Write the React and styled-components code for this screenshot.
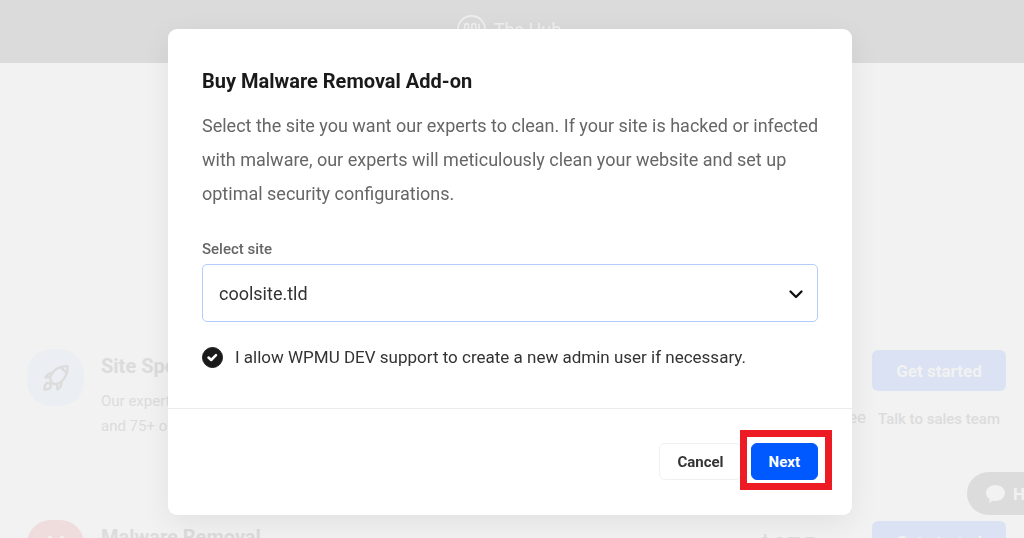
import React, { useState } from 'react';
import styled, { createGlobalStyle } from 'styled-components';

const GlobalStyle = createGlobalStyle`
  * {
    box-sizing: border-box;
  }

  body {
    margin: 0;
    overflow: hidden;
    font-family: Roboto, 'Liberation Sans', sans-serif;
    background-color: #f2f2f2;
  }
`;

const Page = styled.div`
  height: 100vh;
  overflow: hidden;
`;

const Header = styled.header`
  display: flex;
  justify-content: center;
  align-items: center;
  gap: 8px;
  height: 63px;
  padding: 0 6px 5px 0;
  color: #efefef;
  font-size: 18px;
  background-color: #dbdbdb;
`;

const ServiceList = styled.ul`
  list-style: none;
  margin: 0;
  padding: 286px 18px 0 27px;
`;

const Service = styled.li`
  display: flex;
  align-items: flex-start;
  height: 171px;
`;

const ServiceIcon = styled.span`
  display: flex;
  flex: none;
  justify-content: center;
  align-items: center;
  width: 57px;
  height: 57px;
  margin-right: 17px;
  border-radius: 24px;
  color: ${props => props.$color};
  background-color: ${props => props.$background};
`;

const ServiceBody = styled.div`
  flex: 1;
  color: #dcdcdc;
`;

const ServiceName = styled.h3`
  margin: 4px 0 10px;
  font-size: 20px;
  line-height: 26px;
  font-weight: 700;
`;

const ServiceText = styled.p`
  margin: 0;
  font-size: 15px;
  line-height: 25px;
`;

const ServicePrice = styled.div`
  padding: 9px 6px 0 0;
  color: #dcdcdc;
  font-size: 17px;
  line-height: 24px;
  text-align: right;
`;

const PriceAmount = styled.div`
  margin: 0 50px 11px 0;
  font-size: 26px;
  line-height: 36px;
`;

const ServiceActions = styled.div`
  display: flex;
  flex-direction: column;
  align-items: center;
  gap: 18px;
  width: 134px;
  padding-top: 1px;
`;

const StartButton = styled.button`
  width: 100%;
  height: 41px;
  border: 0;
  border-radius: 6px;
  color: #f2f2f2;
  font: 700 17px Roboto, sans-serif;
  background-color: #dae2f3;
`;

const SalesLink = styled.a`
  color: #dcdcdc;
  font-size: 15px;
  line-height: 20px;
  font-weight: 500;
  text-decoration: none;
  white-space: nowrap;
`;

const HelpButton = styled.button`
  position: fixed;
  right: -40px;
  bottom: 23px;
  display: flex;
  align-items: center;
  gap: 8px;
  width: 97px;
  height: 43px;
  padding: 0 0 0 19px;
  border: 0;
  border-radius: 22px;
  color: #f2f2f2;
  font: 700 17px Roboto, sans-serif;
  background-color: #dcdcdc;
`;

const Overlay = styled.div`
  position: fixed;
  inset: 0;
  display: flex;
  justify-content: center;
  align-items: flex-start;
  padding: 29px 20px 0 16px;
`;

const Dialog = styled.form`
  width: 100%;
  max-width: 684px;
  border-radius: 9px;
  background-color: #fff;
  box-shadow: 0 8px 30px rgba(0, 0, 0, 0.07);
`;

const DialogBody = styled.div`
  padding: 38px 34px;
`;

const Title = styled.h2`
  margin: 0 0 14px;
  color: #1a1a1a;
  font-size: 20px;
  line-height: 28px;
  font-weight: 700;
`;

const Description = styled.p`
  margin: 0 -4px 28px 0;
  color: #666;
  font-size: 18px;
  line-height: 34px;
`;

const FieldLabel = styled.label`
  display: block;
  margin-bottom: 5px;
  color: #666;
  font-size: 15px;
  line-height: 20px;
  font-weight: 500;
`;

const SelectWrap = styled.div`
  position: relative;
  margin-bottom: 22px;

  svg {
    position: absolute;
    top: 22px;
    right: 14px;
    pointer-events: none;
  }
`;

const SiteSelect = styled.select`
  display: block;
  width: 100%;
  height: 58px;
  padding: 0 40px 0 16px;
  appearance: none;
  border: 1px solid #b5cdfb;
  border-radius: 5px;
  outline: none;
  color: #333;
  font: 18px Roboto, sans-serif;
  background-color: #fff;
`;

const CheckRow = styled.label`
  display: flex;
  align-items: center;
  gap: 12px;
  color: #333;
  font-size: 17px;
  line-height: 26px;
`;

const CheckWrap = styled.span`
  position: relative;
  display: flex;
  width: 21px;
  height: 21px;

  svg {
    position: absolute;
    inset: 0;
    pointer-events: none;
  }
`;

const Checkbox = styled.input`
  width: 21px;
  height: 21px;
  margin: 0;
  appearance: none;
  border: 1px solid #1a1a1a;
  border-radius: 50%;
  background-color: #fff;

  &:checked {
    background-color: #1a1a1a;
  }
`;

const DialogFooter = styled.footer`
  display: flex;
  justify-content: flex-end;
  gap: 9px;
  padding: 34px 34px 35px;
  border-top: 1px solid #ebebeb;
`;

const Button = styled.button`
  height: 37px;
  padding: 0 17px;
  border: 1px solid ${props => (props.$primary ? '#0059ff' : '#f0f0f0')};
  border-radius: 6px;
  color: ${props => (props.$primary ? '#fff' : '#333')};
  font: 700 15px Roboto, sans-serif;
  background-color: ${props => (props.$primary ? '#0059ff' : '#fff')};
`;

const Highlight = styled.span`
  position: relative;
  display: flex;

  &::after {
    content: '';
    position: absolute;
    inset: -13px -14px -10px -11px;
    border: 7px solid #ed1c24;
    pointer-events: none;
  }
`;

const HubLogo = () => (
  <svg width="29" height="29" viewBox="0 0 30 30" fill="none" stroke="currentColor" strokeWidth="1.8">
    <circle cx="15" cy="15" r="14" />
    <path d="M8 21V11a2 2 0 0 1 4 0v8a1.7 1.7 0 0 0 3.4 0v-8a2 2 0 0 1 4 0v8a1.7 1.7 0 0 0 3.4 0V9" />
  </svg>
);

const RocketIcon = () => (
  <svg width="26" height="26" viewBox="0 0 26 26" fill="none" stroke="currentColor" strokeWidth="2.4" strokeLinejoin="round">
    <path d="M24.5 1.5C19 1 14 2.5 10.500 6.500 8 9.500 6.800 12 7.500 15c.5 2 2 3.500 4 4 3 .6 5.500-.7 8-3.500 4-4 5.300-8.500 5-14z" />
    <path d="M18 2.500l6 5.500M9 8.500C6.500 7.500 4.500 9 2.500 12.500l4.500-.5M18.500 17c.5 3-.5 5-4 7.500l-.5-5" />
    <path d="M1.500 24.500c-.2-3 .5-5.500 2.500-6.300 2.500-.7 4.500 1.500 3.800 3.600-.8 2-3.300 2.900-6.300 2.700z" />
  </svg>
);

const BugIcon = () => (
  <svg width="26" height="26" viewBox="0 0 26 26" fill="none" stroke="currentColor" strokeWidth="4" strokeLinecap="round">
    <path d="M7 2l3 3M19 2l-3 3" />
    <path d="M7 12c0-5 2-8 6-8s6 3 6 8v5a6 6 0 0 1-12 0z" fill="currentColor" stroke="none" />
  </svg>
);

const services = [
  {
    name: 'Site Speed',
    text: ['Our experts', 'and 75+ on'],
    color: '#dcdcdc',
    background: '#ebeff3',
    icon: <RocketIcon />,
    note: 'Free'
  },
  {
    name: 'Malware Removal',
    text: [],
    color: '#f2f2f2',
    background: '#efdcdc',
    icon: <BugIcon />,
    amount: '$275'
  }
];

function ServiceRow({ service }) {
  return (
    <Service>
      <ServiceIcon $color={service.color} $background={service.background}>
        {service.icon}
      </ServiceIcon>
      <ServiceBody>
        <ServiceName>{service.name}</ServiceName>
        {service.text.map(line => (
          <ServiceText key={line}>{line}</ServiceText>
        ))}
      </ServiceBody>
      <ServicePrice>
        <PriceAmount>{service.amount || '\u00a0'}</PriceAmount>
        {service.note}
      </ServicePrice>
      <ServiceActions>
        <StartButton type="button">Get started</StartButton>
        <SalesLink href="#sales">Talk to sales team</SalesLink>
      </ServiceActions>
    </Service>
  );
}

function BuyDialog() {
  const [allowed, setAllowed] = useState(true);

  return (
    <Dialog role="dialog" aria-labelledby="dialog-title" onSubmit={e => e.preventDefault()}>
      <DialogBody>
        <Title id="dialog-title">Buy Malware Removal Add-on</Title>
        <Description>
          Select the site you want our experts to clean. If your site is hacked or infected with
          malware, our experts will meticulously clean your website and set up optimal security
          configurations.
        </Description>
        <FieldLabel htmlFor="site">Select site</FieldLabel>
        <SelectWrap>
          <SiteSelect id="site">
            <option>coolsite.tld</option>
          </SiteSelect>
          <svg width="16" height="16" viewBox="0 0 16 16" fill="none" stroke="#111" strokeWidth="2.3" strokeLinecap="round" strokeLinejoin="round">
            <path d="M2.500 5.500L8 11l5.500-5.500" />
          </svg>
        </SelectWrap>
        <CheckRow htmlFor="allow">
          <CheckWrap>
            <Checkbox
              id="allow"
              type="checkbox"
              checked={allowed}
              onChange={e => setAllowed(e.target.checked)}
            />
            <svg width="21" height="21" viewBox="0 0 21 21" fill="none" stroke="#fff" strokeWidth="2.5" strokeLinecap="round" strokeLinejoin="round">
              <path d="M6.500 10.500l2.700 2.500 4.800-4.800" />
            </svg>
          </CheckWrap>
          I allow WPMU DEV support to create a new admin user if necessary.
        </CheckRow>
      </DialogBody>
      <DialogFooter>
        <Button type="button">Cancel</Button>
        <Highlight>
          <Button type="submit" $primary>
            Next
          </Button>
        </Highlight>
      </DialogFooter>
    </Dialog>
  );
}

export default function App() {
  return (
    <Page>
      <GlobalStyle />
      <Header>
        <HubLogo />
        The Hub
      </Header>
      <ServiceList>
        {services.map(service => (
          <ServiceRow key={service.name} service={service} />
        ))}
      </ServiceList>
      <HelpButton type="button">
        <svg width="19" height="18" viewBox="0 0 19 18" fill="currentColor">
          <path d="M9.500 0C14.700 0 19 3.600 19 8s-4.300 8-9.500 8c-1 0-1.900-.1-2.700-.3L3 18l.7-3.800C1.400 12.700 0 10.500 0 8c0-4.400 4.300-8 9.500-8z" />
        </svg>
        Help
      </HelpButton>
      <Overlay>
        <BuyDialog />
      </Overlay>
    </Page>
  );
}
